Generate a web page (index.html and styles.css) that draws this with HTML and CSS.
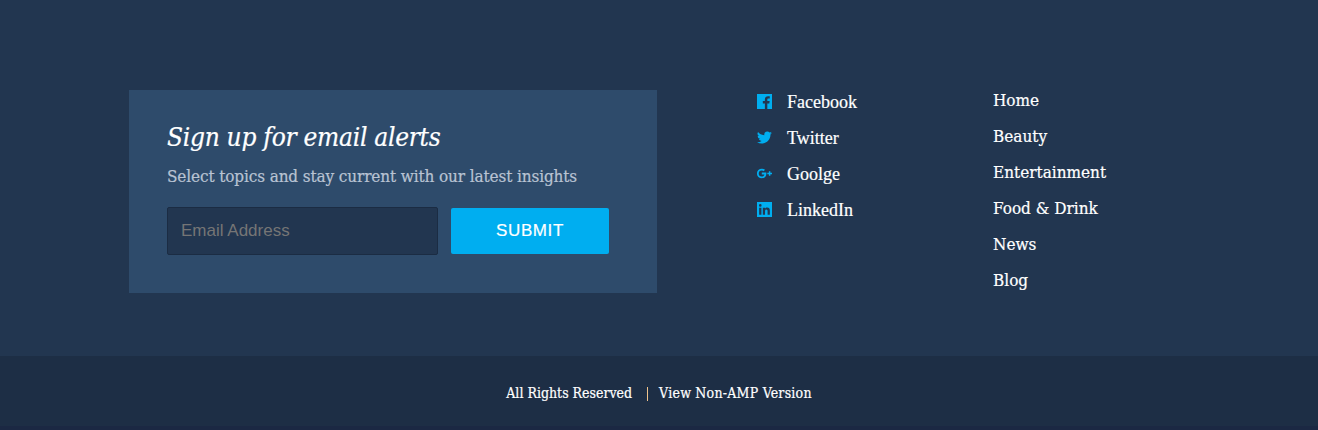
FILE: index.html
```
<!DOCTYPE html>
<html lang="en">
<head>
<meta charset="utf-8">
<title>Footer</title>
<link rel="stylesheet" href="styles.css">
</head>
<body>
<footer>
  <div class="main">
    <section class="signup">
      <h2>Sign up for email alerts</h2>
      <p>Select topics and stay current with our latest insights</p>
      <form>
        <input type="email" placeholder="Email Address">
        <button type="button">SUBMIT</button>
      </form>
    </section>
    <ul class="social">
      <li><svg viewBox="0 0 16 16"><path d="M0 0h16v16h-5V10h2.1l.4-2.5H11V6c0-.8.3-1.2 1.2-1.2h1.4V2.5c-.4-.1-1.100-.1-1.800-.1-2 0-3.400 1.200-3.400 3.400v1.700H6.200V10h2.200v6H0z"/></svg><a>Facebook</a></li>
      <li><svg viewBox="0 0 24 24"><path d="M23.950 4.600a10 10 0 0 1-2.800.8 4.900 4.900 0 0 0 2.150-2.700c-.95.550-2 .95-3.130 1.180a4.920 4.920 0 0 0-8.380 4.480C7.700 8.200 4.070 6.200 1.640 3.200a4.900 4.900 0 0 0 1.520 6.570 4.900 4.900 0 0 1-2.230-.6v.06a4.920 4.920 0 0 0 3.950 4.830 5 5 0 0 1-2.220.08 4.930 4.930 0 0 0 4.600 3.420A9.870 9.870 0 0 1 0 19.540a14 14 0 0 0 7.550 2.200c9.050 0 14-7.500 14-13.980l-.02-.64a10 10 0 0 0 2.420-2.520z"/></svg><a>Twitter</a></li>
      <li><svg viewBox="0 0 24 24"><path d="M7.640 10.500v3.100h4.200c-.2 1.200-1.400 3.300-4.200 3.300a4.900 4.900 0 0 1 0-9.800c1.400 0 2.400.6 3 1.150l2.200-2.200A7.700 7.700 0 0 0 7.640 4.300a7.700 7.700 0 0 0 0 15.400c4.400 0 7.400-3.100 7.400-7.500 0-.6-.05-1.200-.15-1.700zM19 8.500h2.400v2.400H24v2.300h-2.600v2.500H19v-2.500h-2.500v-2.300H19z"/></svg><a>Goolge</a></li>
      <li><svg viewBox="0 0 16 16"><path fill-rule="evenodd" d="M0 0h16v16H0zM2.300 6v7.600h2.400V6zM3.500 2.200a1.400 1.400 0 1 0 0 2.800 1.400 1.400 0 0 0 0-2.800zM6.200 6v7.600h2.400V9.800c0-1.100.4-1.800 1.400-1.800s1.300.8 1.300 1.900v3.700h2.400V9.200c0-2.100-.8-3.400-2.800-3.400-1.200 0-1.900.6-2.300 1.200V6z"/></svg><a>LinkedIn</a></li>
    </ul>
    <ul class="links">
      <li>Home</li><li>Beauty</li><li>Entertainment</li><li>Food &amp; Drink</li><li>News</li><li>Blog</li>
    </ul>
  </div>
  <div class="legal"><span>All Rights Reserved</span><i class="sep"></i><a>View Non-AMP Version</a></div>
</footer>
</body>
</html>
```
FILE: styles.css
```
* { box-sizing: border-box; margin: 0; padding: 0; }
body { background: #223650; color: #fff; font-family: "DejaVu Serif Condensed", "DejaVu Serif", serif; -webkit-text-stroke: 0.2px currentColor; }
footer { height: 430px; display: flex; flex-direction: column; }
.main { height: 356px; padding: 90px 0 0 129px; display: flex; align-items: flex-start; }
.signup { width: 528px; height: 203px; background: #2e4b6b; padding: 30px 38px; }
h2 { font-size: 26px; font-style: italic; font-weight: 400; line-height: 34px; letter-spacing: -0.27px; white-space: nowrap; }
p { font-size: 17px; line-height: 24px; letter-spacing: -0.12px; margin-top: 10px; color: #b9c3d3; white-space: nowrap; }
form { display: flex; align-items: center; gap: 13px; margin-top: 19px; }
input { width: 271px; height: 48px; background: #223650; border: 1px solid #1b2c43; border-radius: 2px; padding: 0 13px; font: 17px "Liberation Sans", Arial, sans-serif; color: #fff; -webkit-text-stroke: 0; }
input::placeholder { color: #757575; }
button { width: 158px; height: 46px; background: #00aef0; border: 0; border-radius: 2px; color: #fff; font: 17px "Liberation Sans", Arial, sans-serif; letter-spacing: 0.6px; }
ul { list-style: none; }
.social { width: 236px; margin-left: 100px; font: 18px "Liberation Serif", "Times New Roman", serif; }
.social li { height: 36px; display: flex; align-items: flex-start; line-height: 24px; }
.social svg { width: 15px; height: 15px; fill: #00aef0; margin: 4px 15px 0 0; }
.links { font-size: 17px; line-height: 20px; white-space: nowrap; }
.links li { height: 36px; }
.legal { flex: 1; background: #1d2e45; border-bottom: 4px solid #1b2843; display: flex; justify-content: center; padding-top: 27px; font-size: 14px; line-height: 20px; }
.legal a { letter-spacing: 0.23px; }
.sep { width: 1px; height: 14px; margin: 4px 11px 0 15px; background: #efc38c; }
```
